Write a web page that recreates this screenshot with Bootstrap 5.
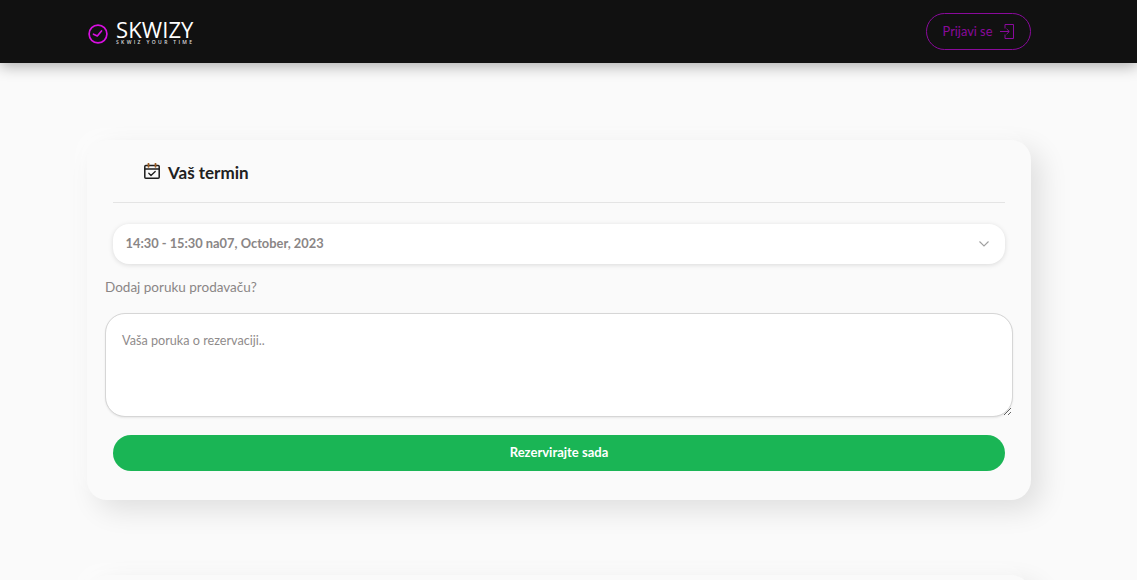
<!DOCTYPE html>
<html lang="sr">
<head>
<meta charset="utf-8">
<title>Skwizy</title>
<link href="https://cdn.jsdelivr.net/npm/bootstrap@5.3.0/dist/css/bootstrap.min.css" rel="stylesheet">
<style>
html{overflow:hidden}
body{background:#fafafa;font-family:"Lato","Open Sans",sans-serif;color:#212529}
.topbar{background:#111;height:63px;box-shadow:0 3px 14px rgba(0,0,0,.32);padding:0 106px 0 88px}
.logo-word{font-family:"Open Sans",sans-serif;font-weight:400;font-size:22px;line-height:16px;color:#fff;letter-spacing:.1px}
.logo-sub{font-family:"Open Sans",sans-serif;font-size:5px;line-height:7px;margin-top:2px;color:#ddd;letter-spacing:2.35px;font-weight:600;white-space:nowrap}
.login-btn{width:105px;height:37px;border:1px solid #8a0a9c;color:#8a0a9c;font-size:12.8px;background:transparent;padding:0}
.login-btn:hover{color:#8a0a9c;border-color:#8a0a9c}
.page-wrap{width:944px;margin:77px 0 0 87px}
.term-card{background:#fafafa;border:0;border-radius:20px;padding:0 26px 29px;box-shadow:10px 10px 28px rgba(0,0,0,.11),-8px -8px 16px rgba(255,255,255,.55)}
.term-head{height:63px;border-bottom:1px solid #e4e4e4;padding:3px 0 0 31px;color:#212121;font-size:17px;font-weight:700}
.term-icon{margin-top:-3px}
.slot{height:40px;margin-top:21px;background:#fff;border:0;border-radius:16px;padding:0 16px 0 12.500px;box-shadow:0 1px 5px rgba(0,0,0,.13)}
.slot-text{font-size:12.85px;font-weight:700;color:#8a8686}
.msg-label{display:block;margin:15px -8px 0;font-size:13.5px;line-height:16px;color:#8a8686}
.msg-box{display:block;width:908px;max-width:none;height:104px;margin:18px -8px 0;padding:18px 16px;border:1px solid #d6d6d6;border-radius:20px;font-size:12.65px;color:#555;box-shadow:0 1px 2px rgba(0,0,0,.08)}
.msg-box::placeholder{color:#8f8b8b;opacity:1}
.book-btn{display:block;width:100%;height:36px;margin-top:18px;padding:0;background:#1ab555;border:0;border-radius:18px;color:#fff;font-size:13px;font-weight:700}
.book-btn:hover{background:#1ab555;color:#fff}
.next-card{height:120px;margin-top:75px}
</style>
</head>
<body>
<nav class="topbar d-flex align-items-center justify-content-between">
  <a href="#" class="d-flex align-items-center text-decoration-none">
    <svg width="20" height="20" viewBox="0 0 20 20" fill="none" stroke="#d80fe0" stroke-width="1.7" stroke-linecap="round" stroke-linejoin="round" class="me-2 mt-1"><circle cx="10" cy="10" r="8.9"/><path d="M5.500 10.200 9.300 12 13.500 7"/></svg>
    <span class="d-flex flex-column mt-1">
      <span class="logo-word">SKWIZY</span>
      <span class="logo-sub">SKWIZ YOUR TIME</span>
    </span>
  </a>
  <a href="#" class="btn login-btn rounded-pill d-flex align-items-center justify-content-center gap-2">
    <span>Prijavi se</span>
    <svg width="14" height="15" viewBox="0 0 14 15" fill="none" stroke="#8a0a9c" stroke-width="1"><path d="M5 .5h8.500v14H5v-4M5 4.500V.5"/><path d="M0 7.500h9M6.500 4.800l2.800 2.700-2.800 2.700"/></svg>
  </a>
</nav>
<main class="page-wrap">
  <section class="card term-card">
    <div class="term-head d-flex align-items-center gap-2">
      <svg class="term-icon" width="16" height="16" viewBox="0 0 16 16" fill="none" stroke="#1d1d1d" stroke-width="1.500" stroke-linecap="round" stroke-linejoin="round"><rect x=".8" y="2.600" width="14.400" height="12.600" rx="1"/><path d="M1 6h14" stroke-width="1.300"/><path d="M4.500 .8v3M11.500 .8v3" stroke="#9a5a20" stroke-width="1.800"/><path d="m4.800 10.300 2.200 2.200 4.200-4" stroke-width="1.300"/></svg>
      <span>Vaš termin</span>
    </div>
    <div class="slot d-flex align-items-center justify-content-between">
      <span class="slot-text">14:30 - 15:30 na07, October, 2023</span>
      <svg width="10" height="6" viewBox="0 0 10 6" fill="none" stroke="#a0a0a0" stroke-width="1.100"><path d="m.5.5 4.500 4.500L9.500.5"/></svg>
    </div>
    <label class="msg-label" for="poruka">Dodaj poruku prodavaču?</label>
    <textarea class="form-control msg-box" id="poruka" placeholder="Vaša poruka o rezervaciji.."></textarea>
    <button type="button" class="btn book-btn">Rezervirajte sada</button>
  </section>
  <section class="card term-card next-card"></section>
</main>
<script src="https://cdn.jsdelivr.net/npm/bootstrap@5.3.0/dist/js/bootstrap.bundle.min.js"></script>
</body>
</html>
